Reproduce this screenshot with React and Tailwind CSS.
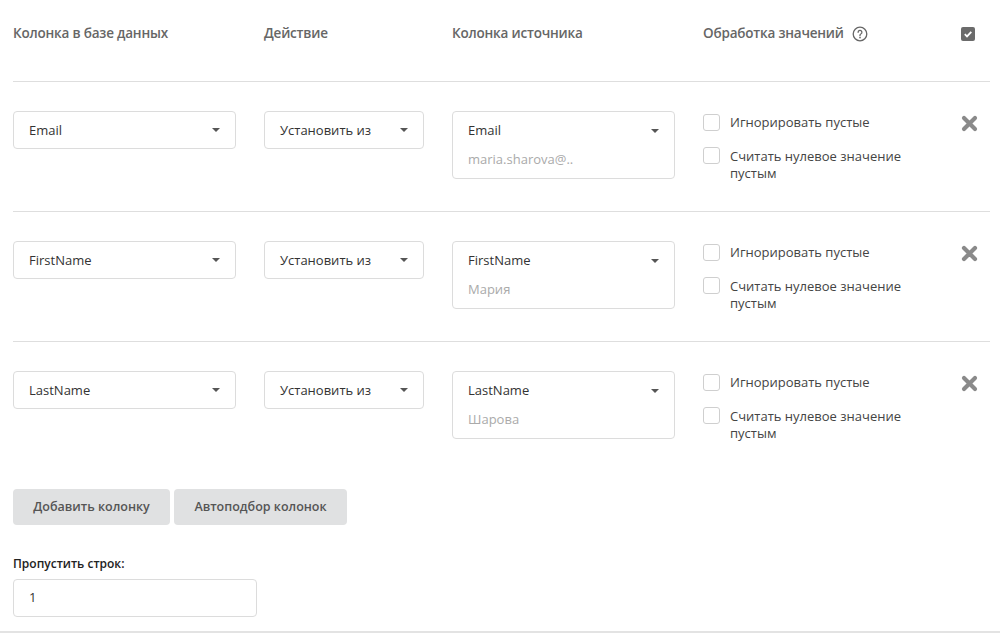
const rows = [
  { db: "Email", src: "Email", sample: "maria.sharova@.." },
  { db: "FirstName", src: "FirstName", sample: "Мария" },
  { db: "LastName", src: "LastName", sample: "Шарова" },
];

function Caret() {
  return (
    <svg width="8" height="4" viewBox="0 0 8 4" className="shrink-0">
      <path d="M0 0h8L4 4z" fill="#555" />
    </svg>
  );
}

function Select({ value, className }) {
  return (
    <div
      className={`h-[38px] flex items-center justify-between pl-[15px] pr-[15px] border border-[#dcdcdc] rounded-[4px] bg-white text-[13px] text-[#333] ${className}`}
    >
      <span className="pt-[1px]">{value}</span>
      <Caret />
    </div>
  );
}

function Box() {
  return <span className="w-[17px] h-[17px] shrink-0 border border-[#cfcfcf] rounded-[3px] bg-white" />;
}

export default function App() {
  return (
    <div
      className="w-[1000px] h-[633px] bg-white overflow-hidden relative"
      style={{ fontFamily: '"Open Sans", "Noto Sans", sans-serif' }}
    >
      <div className="pl-[13px] pr-[10px]">
        <div className="h-[82px] flex items-center border-b border-[#dedede] text-[13.5px] font-semibold text-[#666] tracking-[-0.2px] pb-[14px]">
          <div className="w-[251px]">Колонка в базе данных</div>
          <div className="w-[188px]">Действие</div>
          <div className="w-[251px]">Колонка источника</div>
          <div className="w-[258px] flex items-center gap-[8px]">
            Обработка значений
            <svg width="16" height="16" viewBox="0 0 16 16">
              <circle cx="8" cy="8" r="6.8" fill="none" stroke="#666" strokeWidth="1.3" />
              <path d="M6.1 6.3a1.9 1.9 0 1 1 2.7 1.7c-.6.3-.8.6-.8 1.3v.4" fill="none" stroke="#666" strokeWidth="1.3" strokeLinecap="round" />
              <circle cx="8" cy="11.6" r=".85" fill="#666" />
            </svg>
          </div>
          <div className="w-[14px] h-[14px] rounded-[2px] bg-[#6b6b6b] flex items-center justify-center">
            <svg width="10" height="10" viewBox="0 0 10 10">
              <path d="M1.8 5.2l2.2 2.2L8.3 2.8" fill="none" stroke="#fff" strokeWidth="1.8" />
            </svg>
          </div>
        </div>

        {rows.map((r, i) => (
          <div
            key={i}
            className={`flex items-start pt-[29px] h-[130px] ${i < rows.length - 1 ? "border-b border-[#dedede]" : ""}`}
          >
            <Select value={r.db} className="w-[223px]" />
            <Select value="Установить из" className="w-[160px] ml-[28px]" />
            <div className="w-[223px] ml-[28px] h-[68px] border border-[#dcdcdc] rounded-[4px] pl-[15px] pr-[15px] text-[13px]">
              <div className="h-[37px] flex items-center justify-between text-[#333]">
                <span>{r.src}</span>
                <Caret />
              </div>
              <div className="text-[#aaa] mt-[1px]">{r.sample}</div>
            </div>
            <div className="ml-[28px] w-[255px] pt-[3px] text-[13px] text-[#444]">
              <div className="flex items-center gap-[10px] h-[17px]">
                <Box />
                <span>Игнорировать пустые</span>
              </div>
              <div className="flex items-start gap-[10px] mt-[16px]">
                <Box />
                <span className="leading-[17px] w-[180px] mt-[1px]">Считать нулевое значение пустым</span>
              </div>
            </div>
            <svg width="17" height="17" viewBox="0 0 17 17" className="mt-[4px] ml-[3px]">
              <path d="M3 3l11 11M14 3L3 14" stroke="#8a8a8a" strokeWidth="4.2" strokeLinecap="round" />
            </svg>
          </div>
        ))}

        <div className="flex gap-[4px] mt-[17px]">
          <button className="h-[36px] w-[157px] rounded-[4px] bg-[#e0e1e2] text-[12.5px] font-semibold text-[#555]">
            Добавить колонку
          </button>
          <button className="h-[36px] w-[173px] rounded-[4px] bg-[#e0e1e2] text-[12.5px] font-semibold text-[#555]">
            Автоподбор колонок
          </button>
        </div>

        <div className="mt-[30px] text-[12px] font-semibold text-[#222]">Пропустить строк:</div>
        <div className="mt-[6px] w-[244px] h-[38px] border border-[#dcdcdc] rounded-[4px] flex items-center pl-[15px] text-[13px] text-[#333]">
          1
        </div>
      </div>
      <div className="absolute left-0 right-0 bottom-0 h-[2px] bg-[#e3e3e3]" />
    </div>
  );
}
